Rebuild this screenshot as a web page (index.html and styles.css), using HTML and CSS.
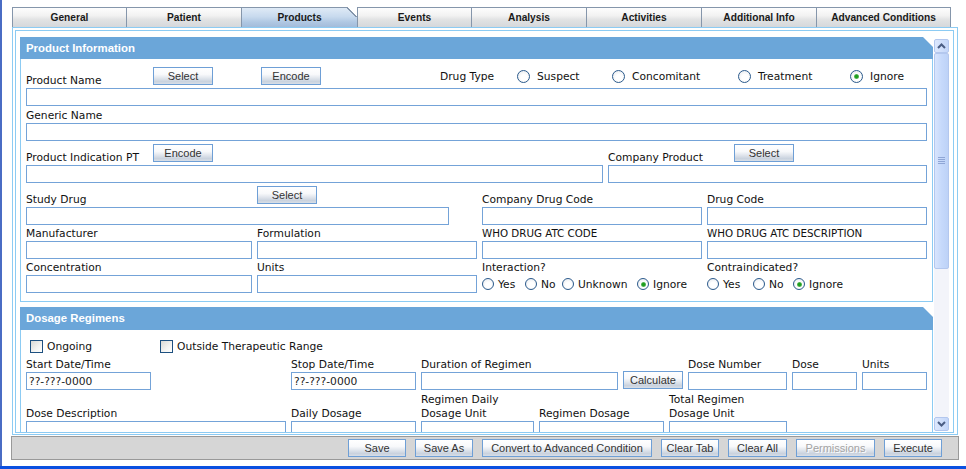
FILE: index.html
```html
<!DOCTYPE html>
<html>
<head>
<meta charset="utf-8">
<title>Products</title>
<link rel="stylesheet" href="styles.css">
</head>
<body>
<div class="window">
  <div class="tabs">
    <div class="tab w114">General</div>
    <div class="tab w115">Patient</div>
    <div class="tab w116 sel">Products</div>
    <div class="tab w114">Events</div>
    <div class="tab w115">Analysis</div>
    <div class="tab w115">Activities</div>
    <div class="tab w115">Additional Info</div>
    <div class="tab w135">Advanced Conditions</div>
  </div>

  <div class="frame">
    <div class="inner">
      <div class="content">

        <section class="panel">
          <div class="phead">Product Information</div>
          <div class="pbody">
            <div class="row-a">
              <span class="lbl nm">Product Name</span>
              <button class="btn">Select</button>
              <button class="btn enc">Encode</button>
              <span class="lbl dt">Drug Type</span>
              <span class="opt big o95"><i class="radio"></i>Suspect</span>
              <span class="opt big o126"><i class="radio"></i>Concomitant</span>
              <span class="opt big o112"><i class="radio"></i>Treatment</span>
              <span class="opt big"><i class="radio on"></i>Ignore</span>
            </div>
            <input class="in" type="text">

            <div class="field">
              <div class="head h17"><span class="lbl">Generic Name</span></div>
              <input class="in" type="text">
            </div>

            <div class="row">
              <div class="field w577">
                <div class="head h24"><span class="lbl w127">Product Indication PT</span><button class="btn top3">Encode</button></div>
                <input class="in" type="text">
              </div>
              <div class="field w319">
                <div class="head h24"><span class="lbl w126">Company Product</span><button class="btn top3">Select</button></div>
                <input class="in" type="text">
              </div>
            </div>

            <div class="row">
              <div class="field w423">
                <div class="head h24"><span class="lbl w231">Study Drug</span><button class="btn top3">Select</button></div>
                <input class="in" type="text">
              </div>
              <div class="field w220 ml28">
                <div class="head h24"><span class="lbl">Company Drug Code</span></div>
                <input class="in" type="text">
              </div>
              <div class="field w220">
                <div class="head h24"><span class="lbl">Drug Code</span></div>
                <input class="in" type="text">
              </div>
            </div>

            <div class="row">
              <div class="field w226">
                <div class="head h16"><span class="lbl">Manufacturer</span></div>
                <input class="in" type="text">
              </div>
              <div class="field w220">
                <div class="head h16"><span class="lbl">Formulation</span></div>
                <input class="in" type="text">
              </div>
              <div class="field w220">
                <div class="head h16"><span class="lbl caps">WHO DRUG ATC CODE</span></div>
                <input class="in" type="text">
              </div>
              <div class="field w220">
                <div class="head h16"><span class="lbl caps">WHO DRUG ATC DESCRIPTION</span></div>
                <input class="in" type="text">
              </div>
            </div>

            <div class="row">
              <div class="field w226">
                <div class="head h16"><span class="lbl">Concentration</span></div>
                <input class="in" type="text">
              </div>
              <div class="field w220">
                <div class="head h16"><span class="lbl">Units</span></div>
                <input class="in" type="text">
              </div>
              <div class="field w220">
                <div class="head h16"><span class="lbl">Interaction?</span></div>
                <div class="radios">
                  <span class="opt o43"><i class="radio sm"></i>Yes</span>
                  <span class="opt o37"><i class="radio sm"></i>No</span>
                  <span class="opt o75"><i class="radio sm"></i>Unknown</span>
                  <span class="opt"><i class="radio sm on"></i>Ignore</span>
                </div>
              </div>
              <div class="field w220">
                <div class="head h16"><span class="lbl">Contraindicated?</span></div>
                <div class="radios">
                  <span class="opt o46"><i class="radio sm"></i>Yes</span>
                  <span class="opt o40"><i class="radio sm"></i>No</span>
                  <span class="opt"><i class="radio sm on"></i>Ignore</span>
                </div>
              </div>
            </div>
          </div>
        </section>

        <section class="panel dosage">
          <div class="phead">Dosage Regimens</div>
          <div class="pbody dbody">
            <div class="checks">
              <span class="opt chk-a"><i class="check"></i>Ongoing</span>
              <span class="opt"><i class="check"></i>Outside Therapeutic Range</span>
            </div>

            <div class="row">
              <div class="field w125">
                <div class="head h19"><span class="lbl">Start Date/Time</span></div>
                <input class="in" type="text" value="??-???-0000">
              </div>
              <div class="field w125 ml135">
                <div class="head h19"><span class="lbl">Stop Date/Time</span></div>
                <input class="in" type="text" value="??-???-0000">
              </div>
              <div class="field w197">
                <div class="head h19"><span class="lbl">Duration of Regimen</span></div>
                <input class="in" type="text">
              </div>
              <div class="field w60">
                <div class="head h19"></div>
                <button class="btn calc">Calculate</button>
              </div>
              <div class="field w99">
                <div class="head h19"><span class="lbl">Dose Number</span></div>
                <input class="in" type="text">
              </div>
              <div class="field w65">
                <div class="head h19"><span class="lbl">Dose</span></div>
                <input class="in" type="text">
              </div>
              <div class="field w65">
                <div class="head h19"><span class="lbl">Units</span></div>
                <input class="in" type="text">
              </div>
            </div>

            <div class="row">
              <div class="field w260">
                <div class="head h31"><span class="lbl">Dose Description</span></div>
                <input class="in" type="text">
              </div>
              <div class="field w125">
                <div class="head h31"><span class="lbl">Daily Dosage</span></div>
                <input class="in" type="text">
              </div>
              <div class="field w113">
                <div class="head h31"><span class="lbl two">Regimen Daily<br>Dosage Unit</span></div>
                <input class="in" type="text">
              </div>
              <div class="field w125">
                <div class="head h31"><span class="lbl">Regimen Dosage</span></div>
                <input class="in" type="text">
              </div>
              <div class="field w118">
                <div class="head h31"><span class="lbl two">Total Regimen<br>Dosage Unit</span></div>
                <input class="in" type="text">
              </div>
            </div>
          </div>
        </section>

      </div>

      <div class="scrollbar">
        <div class="sb-btn">
          <svg width="11" height="8" viewBox="0 0 11 8"><path d="M2 6 L5.5 2.5 L9 6" fill="none" stroke="#4a5d84" stroke-width="2"/></svg>
        </div>
        <div class="sb-track">
          <div class="sb-thumb">
            <svg width="7" height="8" viewBox="0 0 7 8"><path d="M0 0.5H7M0 2.5H7M0 4.5H7M0 6.5H7" stroke="#8fa6d6" stroke-width="1"/></svg>
          </div>
        </div>
        <div class="sb-btn">
          <svg width="11" height="8" viewBox="0 0 11 8"><path d="M2 2 L5.5 5.5 L9 2" fill="none" stroke="#4a5d84" stroke-width="2"/></svg>
        </div>
      </div>
    </div>
  </div>

  <div class="toolbar">
    <button class="btn tb w58">Save</button>
    <button class="btn tb w58">Save As</button>
    <button class="btn tb w170">Convert to Advanced Condition</button>
    <button class="btn tb w58">Clear Tab</button>
    <button class="btn tb w59">Clear All</button>
    <button class="btn tb w79 dis">Permissions</button>
    <button class="btn tb w58">Execute</button>
  </div>
</div>
<div class="taskbar"></div>
</body>
</html>
```

FILE: styles.css
```css
* { box-sizing: border-box; }

html, body {
  margin: 0;
  padding: 0;
  background: #ffffff;
}

body {
  width: 966px;
  height: 469px;
  overflow: hidden;
  font-family: "DejaVu Sans", Verdana, sans-serif;
  font-size: 10.7px;
  color: #111;
}

.window {
  height: 466px;
  border-left: 2px solid #4a6cc4;
  padding: 7px 0 0 10px;
}

.taskbar {
  height: 3px;
  background: #0b50e0;
}

/* ---------- tabs ---------- */
.tabs {
  display: flex;
  height: 20px;
}

.tab {
  position: relative;
  height: 20px;
  flex: none;
  border-top: 1px solid #8596ab;
  border-left: 1px solid #8596ab;
  background: linear-gradient(#fdfdfd 0%, #f2f2f2 40%, #e2e3e4 60%, #d5d8db 100%);
  font: bold 10.2px/19px "Liberation Sans", Arial, sans-serif;
  color: #1a1a1a;
  text-align: center;
}

.tab:last-child { border-right: 1px solid #8596ab; }

.tab.sel {
  background: linear-gradient(#dfeaf6 0%, #c8daee 45%, #afc7e2 75%, #a3bcda 100%);
}

.tab.sel::after {
  content: "";
  position: absolute;
  right: 0;
  top: -1px;
  width: 10px;
  height: 10px;
  background: linear-gradient(to bottom left, #ffffff 0 46%, #8596ab 46% 58%, transparent 58%);
}

.w114 { width: 114px; }
.w115 { width: 115px; }
.w116 { width: 116px; }
.w135 { width: 135px; }

/* ---------- frame ---------- */
.frame {
  width: 946px;
  height: 408px;
  border: 1px solid #8ccbf3;
  padding: 2px 3px 1px 2px;
}

.inner {
  height: 100%;
  border: 1px solid #8ccbf3;
  display: flex;
  gap: 1px;
  padding: 6px 4px 0 4px;
}

.content {
  width: 913px;
  flex: none;
  overflow: hidden;
  display: flex;
  flex-direction: column;
}

.panel { flex: none; }
.panel + .panel { margin-top: 5px; }

.phead {
  height: 22px;
  background: #6ba6d9;
  color: #ffffff;
  font: bold 11.4px/22px "Liberation Sans", Arial, sans-serif;
  padding-left: 6px;
  clip-path: polygon(0 0, calc(100% - 10px) 0, 100% 10px, 100% 100%, 0 100%);
}

.dosage .phead {
  height: 23px;
  line-height: 23px;
}

.pbody {
  border: 1px solid #8ccbf3;
  border-top: none;
  padding: 0 5px 8px 5px;
}

.dbody { padding-top: 10px; }

/* ---------- fields ---------- */
.row {
  display: flex;
  gap: 5px;
}

.field {
  display: flex;
  flex-direction: column;
  flex: none;
}

.head {
  display: flex;
  align-items: flex-end;
  flex: none;
}

.h16 { height: 16px; }
.h17 { height: 17px; }
.h19 { height: 19px; }
.h24 { height: 24px; }
.h31 { height: 31px; }

.lbl {
  flex: none;
  line-height: 13px;
  margin-bottom: 1px;
  white-space: nowrap;
  color: #111;
}

.lbl.two { line-height: 14px; margin-bottom: 0; }
.lbl.caps { font-size: 10.3px; }

.w127 { width: 127px; }
.w126 { width: 126px; }
.w231 { width: 231px; }

.w577 { width: 577px; }
.w319 { width: 319px; }
.w423 { width: 423px; }
.w220 { width: 220px; }
.w226 { width: 226px; }
.w125 { width: 125px; }
.w197 { width: 197px; }
.w60 { width: 60px; }
.w99 { width: 99px; }
.w65 { width: 65px; }
.w260 { width: 260px; }
.w113 { width: 113px; }
.w118 { width: 118px; }

.ml28 { margin-left: 28px; }
.ml135 { margin-left: 135px; }

.in {
  display: block;
  width: 100%;
  height: 18px;
  margin: 0;
  padding: 0 2px;
  border: 1px solid #74a3d8;
  border-radius: 0;
  background: #ffffff;
  font-family: "DejaVu Sans", Verdana, sans-serif;
  font-size: 10.7px;
  color: #222;
  outline: none;
}

/* row with Product Name */
.row-a {
  display: flex;
  align-items: flex-start;
  height: 29px;
}

.row-a .nm { width: 127px; align-self: flex-end; }
.row-a .btn { margin-top: 8px; }
.row-a .enc { margin-left: 48px; }
.row-a .dt { width: 77px; margin-left: 119px; margin-top: 11px; }
.row-a .opt { margin-top: 11px; height: 13px; }

/* ---------- buttons ---------- */
.btn {
  flex: none;
  width: 60px;
  height: 18px;
  margin: 0;
  padding: 0;
  border: 1px solid #6e9fd6;
  border-radius: 0;
  background: linear-gradient(#ffffff 0%, #f8f9fb 40%, #e6eaf0 58%, #c9d2de 85%, #d9dfe7 100%);
  font: 11px/16px "Liberation Sans", Arial, sans-serif;
  color: #333;
  text-align: center;
}

.btn.top3 { align-self: flex-start; margin-top: 3px; }
.btn.calc { margin-top: -1px; }

/* ---------- radios / checks ---------- */
.opt {
  display: inline-flex;
  align-items: center;
  gap: 4px;
  line-height: 13px;
  white-space: nowrap;
  flex: none;
}

.opt.big { gap: 7px; }
.o95 { width: 95px; }
.o126 { width: 126px; }
.o112 { width: 112px; }
.o43 { width: 43px; }
.o37 { width: 37px; }
.o75 { width: 75px; }
.o46 { width: 46px; }
.o40 { width: 40px; }

.radios {
  display: flex;
  align-items: center;
  height: 18px;
}

.radio {
  position: relative;
  flex: none;
  width: 13px;
  height: 13px;
  border-radius: 50%;
  border: 1px solid #2b5a8c;
  background: radial-gradient(circle at 55% 60%, #ffffff 35%, #e1e5ea 100%);
}

.radio.sm { width: 12px; height: 12px; }

.radio.on::after {
  content: "";
  position: absolute;
  left: 50%;
  top: 50%;
  width: 5px;
  height: 5px;
  margin: -2.5px 0 0 -2.5px;
  border-radius: 50%;
  background: radial-gradient(circle, #1e9e1e 35%, #a6d8a6 100%);
}

.checks {
  display: flex;
  align-items: center;
  height: 13px;
  padding-left: 4px;
}

.chk-a { width: 130px; }

.check {
  flex: none;
  width: 13px;
  height: 13px;
  border: 1px solid #1d5080;
  background: linear-gradient(135deg, #d9d9d5 0%, #f4f4f2 60%, #ffffff 100%);
}

/* ---------- scrollbar ---------- */
.scrollbar {
  width: 15px;
  flex: none;
  display: flex;
  flex-direction: column;
  padding: 2px 0 1px;
}

.sb-btn {
  height: 14px;
  flex: none;
  border: 1px solid #b3c7ee;
  border-radius: 2px;
  background: linear-gradient(to right, #dde8fd, #c3d6f9);
  display: flex;
  align-items: center;
  justify-content: center;
}

.sb-track {
  flex: 1;
  background: #f3f4fa;
}

.sb-thumb {
  height: 216px;
  border: 1px solid #b3c7ee;
  border-radius: 2px;
  background: linear-gradient(to right, #d8e5fd, #c6d9fb 50%, #bdd2f7);
  display: flex;
  align-items: center;
  justify-content: center;
}

/* ---------- toolbar ---------- */
.toolbar {
  width: 948px;
  height: 24px;
  margin: 1px 0 0 -1px;
  border: 1px solid #999999;
  background: #d6d6d6;
  display: flex;
  align-items: center;
  justify-content: flex-end;
  gap: 9px;
  padding-right: 16px;
}

.btn.tb { height: 18px; }
.w58 { width: 58px; }
.w59 { width: 59px; }
.w79 { width: 79px; }
.w170 { width: 170px; }

.btn.dis {
  color: #a3a3a3;
  text-shadow: 1px 1px 0 #ffffff;
}
```
